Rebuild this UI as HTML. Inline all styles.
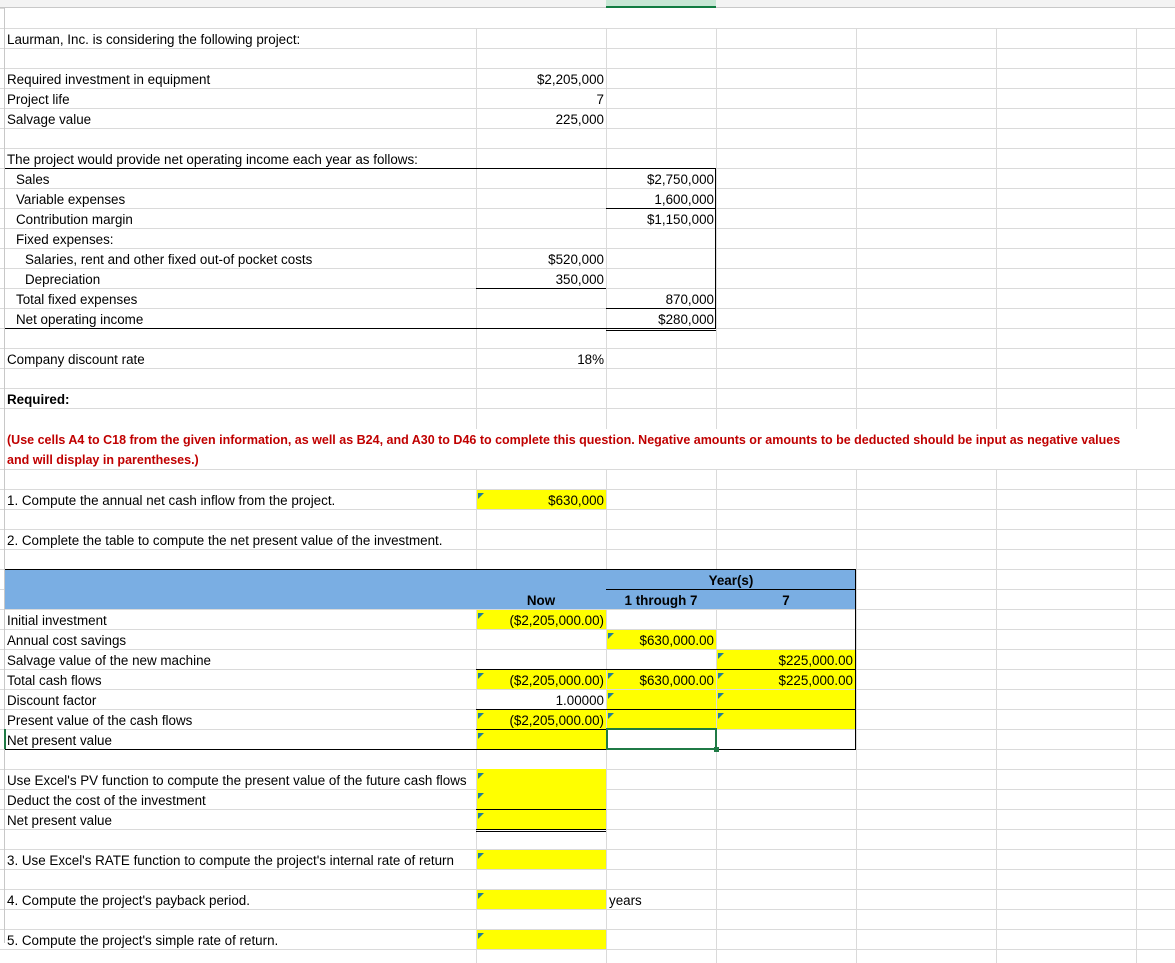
<!DOCTYPE html>
<html><head><meta charset="utf-8"><style>
*{margin:0;padding:0;box-sizing:border-box}
body{width:1175px;height:963px;position:relative;overflow:hidden;background:#fff;font-family:"Liberation Sans",Arial,sans-serif;font-size:13.4px;color:#000}
.a{position:absolute}
.g1{left:0;top:8px;width:1175px;height:420px;background:repeating-linear-gradient(to bottom,#dadada 0 1px,transparent 1px 20px)}
.g2{left:0;top:469px;width:1175px;height:494px;background:repeating-linear-gradient(to bottom,#dadada 0 1px,transparent 1px 20px)}
.v{top:28px;width:1px;height:935px;background:#dadada}
.t{position:absolute;height:20px;line-height:23px;white-space:nowrap}
.r{text-align:right;padding-right:2px}
.y{background:#ffff00}
.tri{position:absolute;width:0;height:0;border-top:6px solid #1f7f9a;border-right:6px solid transparent}
.k{position:absolute;background:#000}
.red{color:#c00000;font-weight:bold;font-size:12.5px}
</style></head><body>
<div class="a" style="left:0;top:0;width:1175px;height:8px;background:#f3f3f3;border-bottom:1px solid #c8c8c8"></div>
<div class="a" style="left:606px;top:0;width:110px;height:8px;background:#c6e7d4;border-bottom:2px solid #107c41"></div>
<div class="a g1"></div><div class="a g2"></div>
<div class="a v" style="left:4px;background:#c8c8c8;top:8px"></div>
<div class="a v" style="left:476px"></div><div class="a v" style="left:606px"></div>
<div class="a v" style="left:716px"></div><div class="a v" style="left:856px"></div>
<div class="a v" style="left:996px"></div><div class="a v" style="left:1136px"></div>
<div class="a" style="left:5px;top:8px;width:1170px;height:20px;background:#fff"></div>
<div class="a" style="left:5px;top:429px;width:1170px;height:40px;background:#fff"></div>

<div class="t" style="left:7px;top:28px">Laurman, Inc. is considering the following project:</div>
<div class="t" style="left:7px;top:68px">Required investment in equipment</div>
<div class="t r" style="left:476px;top:68px;width:130px">$2,205,000</div>
<div class="t" style="left:7px;top:88px">Project life</div>
<div class="t r" style="left:476px;top:88px;width:130px">7</div>
<div class="t" style="left:7px;top:108px">Salvage value</div>
<div class="t r" style="left:476px;top:108px;width:130px">225,000</div>
<div class="t" style="left:7px;top:148px">The project would provide net operating income each year as follows:</div>
<div class="t" style="left:16px;top:168px">Sales</div>
<div class="t r" style="left:606px;top:168px;width:110px">$2,750,000</div>
<div class="t" style="left:16px;top:188px">Variable expenses</div>
<div class="t r" style="left:606px;top:188px;width:110px">1,600,000</div>
<div class="t" style="left:16px;top:208px">Contribution margin</div>
<div class="t r" style="left:606px;top:208px;width:110px">$1,150,000</div>
<div class="t" style="left:16px;top:228px">Fixed expenses:</div>
<div class="t" style="left:25px;top:248px">Salaries, rent and other fixed out-of pocket costs</div>
<div class="t r" style="left:476px;top:248px;width:130px">$520,000</div>
<div class="t" style="left:25px;top:268px">Depreciation</div>
<div class="t r" style="left:476px;top:268px;width:130px">350,000</div>
<div class="t" style="left:16px;top:288px">Total fixed expenses</div>
<div class="t r" style="left:606px;top:288px;width:110px">870,000</div>
<div class="t" style="left:16px;top:308px">Net operating income</div>
<div class="t r" style="left:606px;top:308px;width:110px">$280,000</div>
<div class="k" style="left:5px;top:168px;width:711px;height:1px"></div>
<div class="k" style="left:715px;top:168px;width:1px;height:160px"></div>
<div class="k" style="left:606px;top:208px;width:110px;height:1px"></div>
<div class="k" style="left:476px;top:288px;width:130px;height:1px"></div>
<div class="k" style="left:606px;top:308px;width:110px;height:1px"></div>
<div class="k" style="left:5px;top:328px;width:711px;height:1px"></div>
<div class="k" style="left:606px;top:330px;width:110px;height:1px"></div>
<div class="t" style="left:7px;top:348px">Company discount rate</div>
<div class="t r" style="left:476px;top:348px;width:130px">18%</div>
<div class="t" style="left:7px;top:388px;font-weight:bold">Required:</div>
<div class="t red" style="left:7px;top:429px">(Use cells A4 to C18 from the given information, as well as B24, and A30 to D46 to complete this question. Negative amounts or amounts to be deducted should be input as negative values</div>
<div class="t red" style="left:7px;top:449px">and will display in parentheses.)</div>

<div class="t" style="left:7px;top:489px">1. Compute the annual net cash inflow from the project.</div>
<div class="t r y" style="left:477px;top:490px;width:129px;height:19px;line-height:22px">$630,000</div><div class="tri" style="left:478px;top:493px"></div>
<div class="t" style="left:7px;top:529px">2. Complete the table to compute the net present value of the investment.</div>

<div class="a" style="left:5px;top:569px;width:851px;height:40px;background:#7aaee3"></div>
<div class="k" style="left:5px;top:569px;width:851px;height:1px"></div>
<div class="k" style="left:606px;top:589px;width:250px;height:1px"></div>
<div class="k" style="left:855px;top:569px;width:1px;height:180px"></div>
<div class="t" style="left:606px;top:569px;width:250px;text-align:center;font-weight:bold">Year(s)</div>
<div class="t" style="left:476px;top:589px;width:130px;text-align:center;font-weight:bold">Now</div>
<div class="t" style="left:606px;top:589px;width:110px;text-align:center;font-weight:bold">1 through 7</div>
<div class="t" style="left:716px;top:589px;width:140px;text-align:center;font-weight:bold">7</div>

<div class="t" style="left:7px;top:609px">Initial investment</div>
<div class="t" style="left:7px;top:629px">Annual cost savings</div>
<div class="t" style="left:7px;top:649px">Salvage value of the new machine</div>
<div class="t" style="left:7px;top:669px">Total cash flows</div>
<div class="t" style="left:7px;top:689px">Discount factor</div>
<div class="t" style="left:7px;top:709px">Present value of the cash flows</div>
<div class="t" style="left:7px;top:729px">Net present value</div>

<div class="t r y" style="left:477px;top:610px;width:129px;height:19px;line-height:22px">($2,205,000.00)</div>
<div class="t r y" style="left:607px;top:630px;width:109px;height:19px;line-height:22px">$630,000.00</div>
<div class="t r y" style="left:717px;top:650px;width:138px;height:19px;line-height:22px">$225,000.00</div>
<div class="t r y" style="left:477px;top:670px;width:129px;height:19px;line-height:22px">($2,205,000.00)</div>
<div class="t r y" style="left:607px;top:670px;width:109px;height:19px;line-height:22px">$630,000.00</div>
<div class="t r y" style="left:717px;top:670px;width:138px;height:19px;line-height:22px">$225,000.00</div>
<div class="t r" style="left:477px;top:690px;width:129px;height:19px;line-height:22px">1.00000</div>
<div class="t y" style="left:607px;top:690px;width:109px;height:19px"></div>
<div class="t y" style="left:717px;top:690px;width:138px;height:19px"></div>
<div class="t r y" style="left:477px;top:710px;width:129px;height:19px;line-height:22px">($2,205,000.00)</div>
<div class="t y" style="left:607px;top:710px;width:109px;height:19px"></div>
<div class="t y" style="left:717px;top:710px;width:138px;height:19px"></div>
<div class="t y" style="left:477px;top:730px;width:129px;height:19px"></div>
<div class="k" style="left:476px;top:669px;width:380px;height:1px"></div>
<div class="k" style="left:476px;top:709px;width:380px;height:1px"></div>
<div class="k" style="left:476px;top:729px;width:130px;height:1px"></div>
<div class="k" style="left:5px;top:749px;width:851px;height:1px"></div>
<div class="a" style="left:606px;top:728px;width:111px;height:22px;border:2px solid #1f7a45"></div>
<div class="a" style="left:714px;top:747px;width:5px;height:5px;background:#1f7a45"></div>
<div class="a" style="left:4px;top:729px;width:2px;height:20px;background:#1f7a45"></div>

<div class="tri" style="left:478px;top:613px"></div>
<div class="tri" style="left:608px;top:633px"></div>
<div class="tri" style="left:718px;top:653px"></div>
<div class="tri" style="left:478px;top:673px"></div>
<div class="tri" style="left:608px;top:673px"></div>
<div class="tri" style="left:718px;top:673px"></div>
<div class="tri" style="left:608px;top:693px"></div>
<div class="tri" style="left:718px;top:693px"></div>
<div class="tri" style="left:478px;top:713px"></div>
<div class="tri" style="left:608px;top:713px"></div>
<div class="tri" style="left:718px;top:713px"></div>
<div class="tri" style="left:478px;top:733px"></div>

<div class="t" style="left:7px;top:769px">Use Excel's PV function to compute the present value of the future cash flows</div>
<div class="t" style="left:7px;top:789px">Deduct the cost of the investment</div>
<div class="t" style="left:7px;top:809px">Net present value</div>
<div class="a y" style="left:477px;top:769px;width:129px;height:60px"></div>
<div class="k" style="left:476px;top:809px;width:130px;height:1px"></div>
<div class="k" style="left:476px;top:829px;width:130px;height:1px"></div>
<div class="k" style="left:476px;top:831px;width:130px;height:1px"></div>
<div class="tri" style="left:478px;top:773px"></div>
<div class="tri" style="left:478px;top:793px"></div>
<div class="tri" style="left:478px;top:813px"></div>

<div class="t" style="left:7px;top:849px">3. Use Excel's RATE function to compute the project's internal rate of return</div>
<div class="a y" style="left:477px;top:850px;width:129px;height:19px"></div><div class="tri" style="left:478px;top:853px"></div>
<div class="t" style="left:7px;top:889px">4. Compute the project's payback period.</div>
<div class="a y" style="left:477px;top:890px;width:129px;height:19px"></div><div class="tri" style="left:478px;top:893px"></div>
<div class="t" style="left:609px;top:889px">years</div>
<div class="t" style="left:7px;top:929px">5. Compute the project's simple rate of return.</div>
<div class="a y" style="left:477px;top:930px;width:129px;height:19px"></div><div class="tri" style="left:478px;top:933px"></div>
</body></html>
